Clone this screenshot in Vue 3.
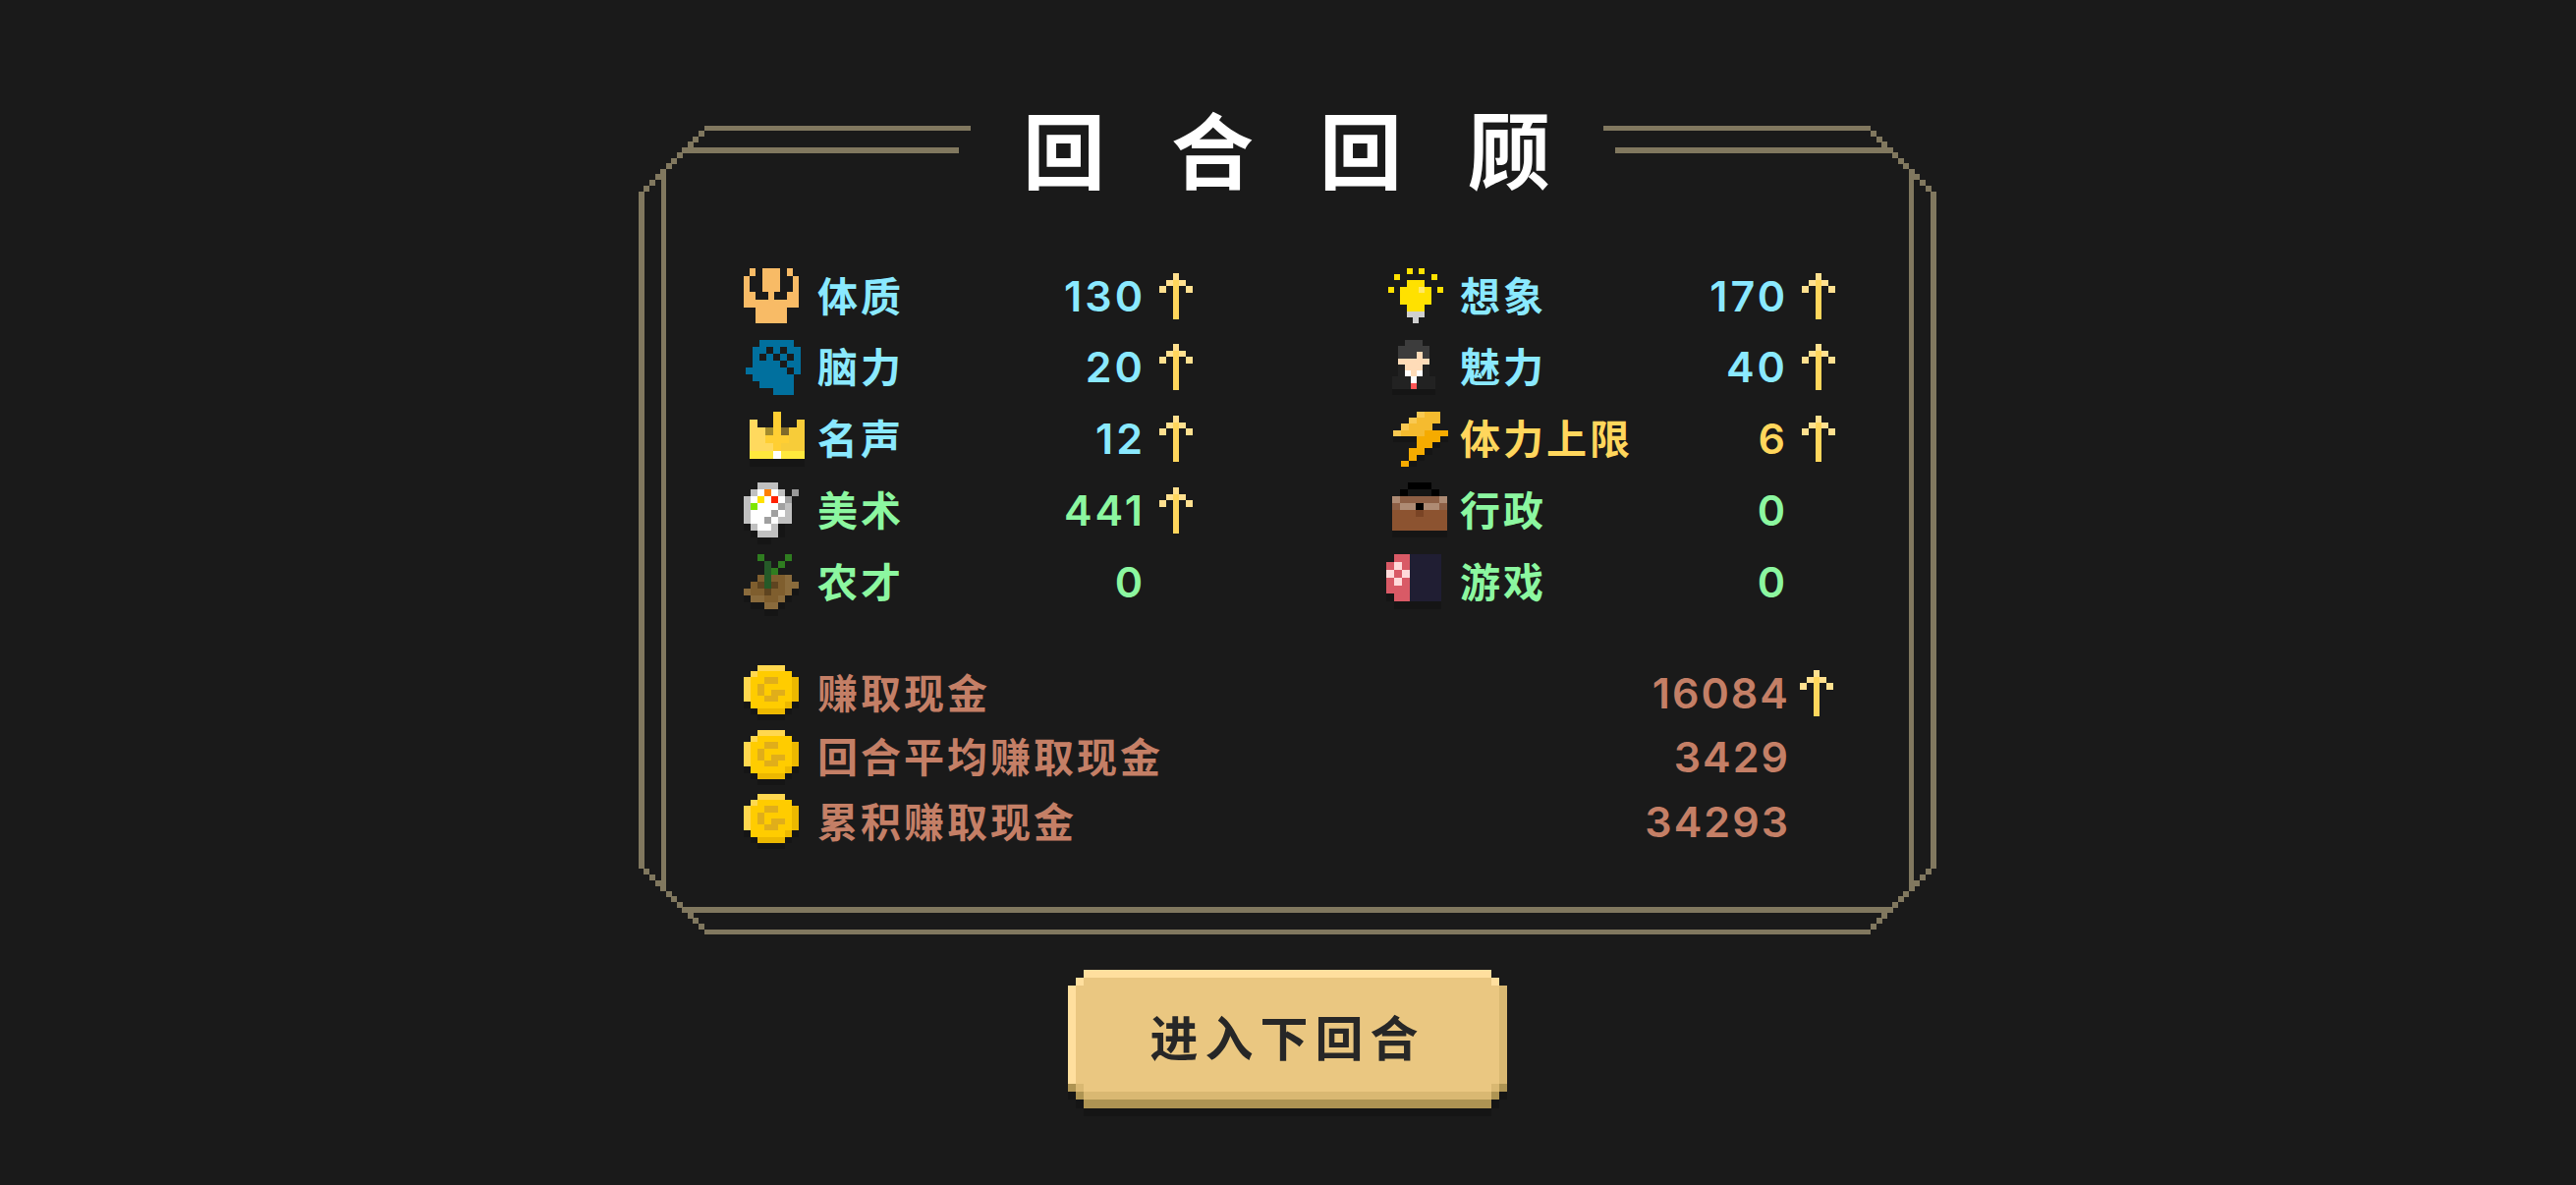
<script setup>
import { h } from "vue";

// pixel art: every icon is a char grid stretched into its w x h box
const icons = {
  body: {
    w: 56, h: 56, rows: 7, colors: { "#": "#f8bb66" },
    map: [".#.###.#.", "#..###..#", "#..###..#", "##..#..##", "#########", "..#####..", "..#####.."],
  },
  brain: {
    w: 56, h: 56, rows: 8, colors: { "#": "#01709e" },
    map: ["..#####.", ".##.#.##", ".#.#.#.#", ".####.##", "######.#", ".######.", "..#####.", "....###."],
  },
  crown: {
    w: 56, h: 56, rows: 7,
    colors: { a: "#ffd95e", b: "#ffcf33", c: "#f7cc39", d: "#a38b2c", e: "#7f6a2b", f: "#ffe83d", w: "#ffffff", s: "#151515" },
    map: ["...b...", "a..b..c", "aadbecc", "aabbbcc", "aaabccc", "fffwfff", "sssssss"],
  },
  palette: {
    w: 56, h: 56, rows: 8,
    colors: { g: "#c0c0c0", w: "#ffffff", o: "#ff7f00", y: "#ffe100", r: "#ff2200", l: "#7fe600", m: "#a0a0a0", h: "#999999", s: "#151515" },
    map: ["..ggg...", ".gwowg.h", "gwywrwm.", "glwwwmg.", "gwwwmwg.", "gwwmwgg.", "sgwwgs..", ".sgggs..", "..ss...."],
  },
  plant: {
    w: 56, h: 56, rows: 8,
    colors: { a: "#2f7d20", d: "#255a28", b: "#7f5e2e", n: "#5e4420", l: "#8a6b3c", s: "#151515" },
    map: ["..a...a.", "...d.a..", "...da...", "..bdbbl.", ".bndnbll", "lbbnbbls", "sllbbls.", ".sslls..", "...ss..."],
  },
  bulb: {
    w: 56, h: 56, rows: 9, colors: { y: "#ffe100", h: "#ffe866", g: "#cfcfcf" },
    map: ["...y.y...", ".y.....y.", "...yyy...", "y.yyyhy.y", "..yyyyy..", "..yyyyy..", "...yyy...", "...ggg...", "....g...."],
  },
  man: {
    w: 44, h: 56, rows: 9,
    colors: { h: "#3c3c3c", k: "#ffdcb8", d: "#222222", w: "#ffffff", r: "#ff5555", s: "#151515" },
    map: ["..hhh..", ".hhhhh.", ".hhhkh.", ".kkkkk.", ".dkkkd.", ".dwkwd.", "dddwddd", "dddrddd", "sssssss"],
  },
  bolt: {
    w: 56, h: 56, rows: 9, colors: { a: "#f9c952", b: "#f5bb2f", o: "#f5ab00", s: "#151515" },
    map: ["...abb.", "..abbb.", ".abbb..", "abbbooo", "sssooos", "...oos.", "..oos..", "..os...", ".os...."],
  },
  briefcase: {
    w: 56, h: 56, rows: 8,
    colors: { k: "#000000", d: "#151515", t: "#ae8b74", b: "#8d5f45", m: "#8c5330", n: "#7a4425", s: "#151515" },
    map: ["..kkk..", ".kdddk.", "tbbbbbt", "bttkttb", "mmmnmmm", "mmmmmmm", "mmmmmmm", "sssssss"],
  },
  card: {
    w: 56, h: 56, rows: 7, colors: { r: "#d95a66", p: "#ffdada", n: "#201e33", s: "#151515" },
    map: [".rrnnnn", "rprnnnn", "prpnnnn", "rprnnnn", "rrrnnnn", "srrnnnn", ".ssssss"],
  },
  coin: {
    w: 56, h: 56, rows: 9, colors: { h: "#ffd84f", m: "#ffcc00", d: "#ecb800", g: "#e0ae1a", s: "#151515" },
    map: ["..hhhh..", ".hmmmmm.", "hmmggmmd", "hmgmmmmd", "hmgmggmd", "hmmggmmd", "smmmmmds", ".sdddds.", "..ssss.."],
  },
  up: {
    w: 34, h: 47, rows: 7, colors: { a: "#ffe08f", b: "#ffd65c" },
    map: ["..a..", ".aba.", "a.b.a", "..b..", "..b..", "..b..", "..b.."],
  },
};

const PixelIcon = (props) => {
  const icon = icons[props.name];
  const cols = icon.map[0].length;
  const boxW = props.box || icon.w;
  const rects = [];
  icon.map.forEach((line, y) => {
    [...line].forEach((c, x) => {
      if (c !== ".") rects.push(h("rect", { x, y, width: 1, height: 1, fill: icon.colors[c] }));
    });
  });
  return h(
    "svg",
    { width: boxW, height: icon.h, viewBox: `0 0 ${boxW} ${icon.h}`, "shape-rendering": "crispEdges", class: "pixel" },
    h("g", { transform: `translate(${props.dx || 0} 0) scale(${icon.w / cols} ${icon.h / icon.rows})` }, rects)
  );
};
PixelIcon.props = ["name", "dx", "box"];

const stats = [
  { icon: "body", dx: 6, label: "体质", value: 130, tone: "blue", up: true },
  { icon: "bulb", dx: 8, label: "想象", value: 170, tone: "blue", up: true },
  { icon: "brain", dx: 8, label: "脑力", value: 20, tone: "blue", up: true },
  { icon: "man", dx: 12, label: "魅力", value: 40, tone: "blue", up: true },
  { icon: "crown", dx: 12, label: "名声", value: 12, tone: "blue", up: true },
  { icon: "bolt", dx: 13, label: "体力上限", value: 6, tone: "yellow", up: true },
  { icon: "palette", dx: 6, label: "美术", value: 441, tone: "green", up: true },
  { icon: "briefcase", dx: 12, label: "行政", value: 0, tone: "green", up: false },
  { icon: "plant", dx: 6, label: "农才", value: 0, tone: "green", up: false },
  { icon: "card", dx: 6, label: "游戏", value: 0, tone: "green", up: false },
];

const money = [
  { label: "赚取现金", value: 16084, up: true },
  { label: "回合平均赚取现金", value: 3429, up: false },
  { label: "累积赚取现金", value: 34293, up: false },
];

// double line frame with stepped corners, panel is 1321 x 823
const W = 1321;
const H = 823;
const frame = [
  [67, 0, 271, 5],
  [982, 0, 272, 5],
  [45, 22, 281, 6],
  [994, 22, 282, 6],
  [67, H - 5, 1187, 5],
  [45, H - 28, 1231, 6],
  [0, 67, 6, H - 134],
  [W - 6, 67, 6, H - 134],
  [23, 44, 5, H - 88],
  [W - 28, 44, 5, H - 88],
];
for (let i = 0; i < 11; i++) {
  const d = Math.round(i * 5.55);
  const x = 67 - d - 6;
  const y = 5 + d;
  frame.push([x, y, 6, 6], [W - x - 6, y, 6, 6], [x, H - y - 6, 6, 6], [W - x - 6, H - y - 6, 6, 6]);
}

// button body, stepped by 8px
const buttonRects = [
  [16, 8, 415, 116, "#eac781"],
  [8, 16, 8, 100, "#eac781"],
  [431, 16, 8, 100, "#eac781"],
  [16, 0, 415, 8, "#ffdf9e"],
  [8, 8, 8, 8, "#ffdf9e"],
  [431, 8, 8, 8, "#ffdf9e"],
  [0, 16, 8, 100, "#ffdf9e"],
  [439, 16, 8, 100, "#d9b872"],
  [0, 116, 8, 8, "#ae9453"],
  [8, 116, 8, 8, "#d9b872"],
  [431, 116, 8, 8, "#d9b872"],
  [439, 116, 8, 8, "#ae9453"],
  [16, 124, 415, 8, "#d9b872"],
  [8, 124, 8, 8, "#ae9453"],
  [431, 124, 8, 8, "#ae9453"],
  [0, 124, 8, 8, "#151515"],
  [439, 124, 8, 8, "#151515"],
  [16, 132, 415, 9, "#ae9453"],
  [8, 132, 8, 9, "#151515"],
  [431, 132, 8, 9, "#151515"],
  [16, 141, 415, 8, "#151515"],
];
</script>

<template>
  <div class="page">
    <section class="panel">
      <svg class="frame" :viewBox="`0 0 ${W} ${H}`" :width="W" :height="H" shape-rendering="crispEdges">
        <rect v-for="(r, i) in frame" :key="i" :x="r[0]" :y="r[1]" :width="r[2]" :height="r[3]" fill="#81785f" />
      </svg>

      <h1 class="title">回合回顾</h1>

      <div class="stats">
        <div v-for="s in stats" :key="s.label" class="row" :class="s.tone">
          <PixelIcon :name="s.icon" :dx="s.dx" :box="70" />
          <span class="label">{{ s.label }}</span>
          <span class="value">{{ s.value }}</span>
          <span class="arrow"><PixelIcon v-if="s.up" name="up" /></span>
        </div>
      </div>

      <div class="money">
        <div v-for="m in money" :key="m.label" class="row brown">
          <PixelIcon name="coin" :dx="6" :box="70" />
          <span class="label">{{ m.label }}</span>
          <span class="value">{{ m.value }}</span>
          <span class="arrow"><PixelIcon v-if="m.up" name="up" /></span>
        </div>
      </div>
    </section>

    <button class="next">
      <svg class="next-bg" viewBox="0 0 447 149" width="447" height="149" shape-rendering="crispEdges">
        <rect v-for="(r, i) in buttonRects" :key="i" :x="r[0]" :y="r[1]" :width="r[2]" :height="r[3]" :fill="r[4]" />
      </svg>
      <span class="next-text">进入下回合</span>
    </button>
  </div>
</template>

<style>
html,
body {
  margin: 0;
  background: #1a1a1a;
}
</style>

<style scoped>
.page {
  min-height: 1206px;
  box-sizing: border-box;
  padding: 128px 1px 0 0;
  display: flex;
  flex-direction: column;
  align-items: center;
  background: #1a1a1a;
  font-family: Inter, "Noto Sans CJK SC", sans-serif;
}

.panel {
  position: relative;
  width: 1321px;
  height: 823px;
  box-sizing: border-box;
  padding: 0 103px 0 101px;
}

.frame {
  position: absolute;
  left: 0;
  top: 0;
}

.title {
  position: relative;
  margin: -28px 0 0 0;
  height: 100px;
  line-height: 100px;
  text-align: center;
  font-family: "Noto Sans CJK SC", sans-serif;
  font-size: 84px;
  font-weight: 700;
  letter-spacing: 67px;
  padding-left: 67px;
  color: #ffffff;
}

.stats {
  margin-top: 73px;
  display: grid;
  grid-template-columns: 463px 463px;
  column-gap: 191px;
  row-gap: 16.75px;
}

.money {
  margin-top: 57px;
  display: flex;
  flex-direction: column;
  gap: 9.5px;
}

.row {
  display: flex;
  align-items: center;
  height: 56px;
}

.pixel {
  display: block;
  overflow: visible;
}

.label {
  flex: 1;
  margin-left: 11px;
  padding-bottom: 5px;
  font-family: "Noto Sans CJK SC", sans-serif;
  font-size: 41px;
  font-weight: 700;
  letter-spacing: 3px;
  white-space: nowrap;
}

.value {
  padding-bottom: 1px;
  font-size: 43px;
  font-weight: 600;
  letter-spacing: 3px;
  margin-right: -3px;
}

.arrow {
  width: 34px;
  height: 47px;
  margin-left: 17px;
}

.money .value {
  margin-right: -2px;
  letter-spacing: 2px;
}

.money .arrow {
  margin-right: 2px;
  margin-left: 12px;
}

.blue {
  color: #8ae9ff;
}

.green {
  color: #8cf7a0;
}

.yellow {
  color: #ffd65c;
}

.brown {
  color: #c47f66;
}

.next {
  position: relative;
  margin-top: 36px;
  width: 447px;
  height: 149px;
  padding: 0 0 16px 0;
  border: none;
  background: none;
  display: flex;
  align-items: center;
  justify-content: center;
  font-family: "Noto Sans CJK SC", sans-serif;
  cursor: pointer;
}

.next-bg {
  position: absolute;
  left: 0;
  top: 0;
}

.next-text {
  position: relative;
  font-size: 49px;
  font-weight: 700;
  letter-spacing: 7px;
  color: #272727;
}
</style>
